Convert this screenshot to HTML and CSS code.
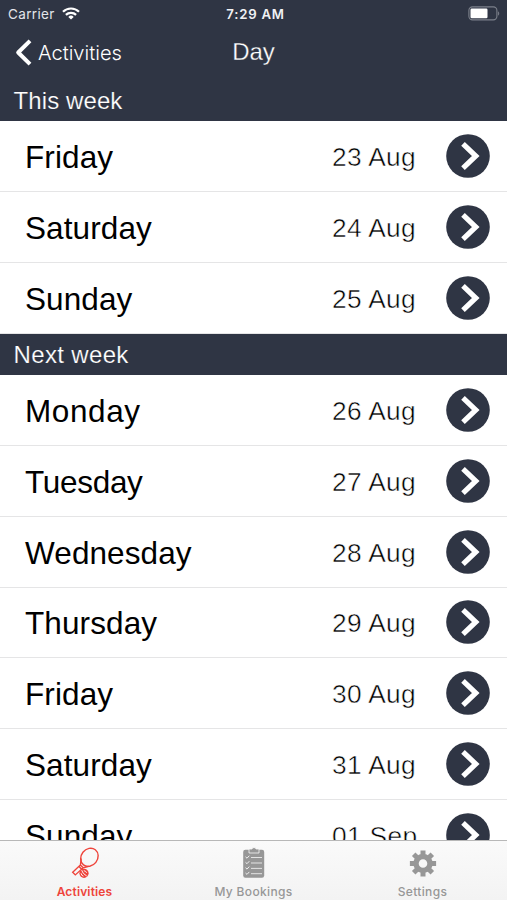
FILE: index.html
```
<!DOCTYPE html>
<html lang="en">
<head>
<meta charset="utf-8">
<title>Day</title>
<link rel="stylesheet" href="styles.css">
</head>
<body>
<svg width="0" height="0" class="defs" aria-hidden="true">
  <symbol id="go" viewBox="0 0 44 44">
    <circle cx="22" cy="22" r="21.8" fill="#2f3544"/>
    <path d="M17 9.8 29.8 22 17 34.2" fill="none" stroke="#fff" stroke-width="5.2"/>
  </symbol>
</svg>
<div class="app">
  <header class="top">
    <div class="status">
      <div class="carrier"><span>Carrier</span>
        <svg width="18" height="13" viewBox="0 0 18 13" fill="none" stroke="#fff" stroke-width="2.2"><path d="M1 4.8a11.3 11.3 0 0 1 16 0M3.9 7.9a7.2 7.2 0 0 1 10.2 0"/><path d="M9 12.6 6.3 9.9a3.8 3.8 0 0 1 5.4 0z" fill="#fff" stroke="none"/></svg>
      </div>
      <div class="clock">7:29 AM</div>
      <svg class="battery" width="33" height="15" viewBox="0 0 33 15"><rect x=".9" y=".9" width="28" height="13" rx="3.6" fill="none" stroke="#7c808b" stroke-width="1.1"/><rect x="2.5" y="2.5" width="17" height="9.8" rx="1.2" fill="#fff"/><path d="M30.2 5.2q2 2.2 0 4.6z" fill="#858993"/></svg>
    </div>
    <nav class="nav">
      <div class="back"><svg width="17" height="27" viewBox="0 0 17 27" fill="none" stroke="#fff" stroke-width="4" stroke-linejoin="round"><path d="M15 1.8 3.2 13.5 15 25.2"/></svg><span>Activities</span></div>
      <h1>Day</h1>
    </nav>
  </header>
  <main class="list">
    <h2 class="first">This week</h2>
    <ul>
      <li><b>Friday</b><time>23 Aug</time><svg><use href="#go"/></svg></li>
      <li><b>Saturday</b><time>24 Aug</time><svg><use href="#go"/></svg></li>
      <li><b>Sunday</b><time>25 Aug</time><svg><use href="#go"/></svg></li>
    </ul>
    <h2 class="next">Next week</h2>
    <ul>
      <li><b class="wide">Monday</b><time>26 Aug</time><svg><use href="#go"/></svg></li>
      <li><b class="tight">Tuesday</b><time>27 Aug</time><svg><use href="#go"/></svg></li>
      <li><b>Wednesday</b><time>28 Aug</time><svg><use href="#go"/></svg></li>
      <li><b>Thursday</b><time>29 Aug</time><svg><use href="#go"/></svg></li>
      <li><b>Friday</b><time>30 Aug</time><svg><use href="#go"/></svg></li>
      <li><b>Saturday</b><time>31 Aug</time><svg><use href="#go"/></svg></li>
      <li><b>Sunday</b><time>01 Sep</time><svg><use href="#go"/></svg></li>
    </ul>
  </main>
  <footer class="tabs">
    <div class="tab active">
      <svg width="30" height="34" viewBox="0 0 30 34" fill="none" stroke="currentColor" stroke-width="1.4"><ellipse cx="19.4" cy="11.3" rx="8.2" ry="9.6" transform="rotate(38 19.4 11.3)"/><path d="M11.2 12.5 10.4 19 2.7 26.2 5.3 28.9 13.2 21.8 18.8 20.3M10.4 19l2.8 2.8M9 20.5l2.7 2.7"/><circle cx="14" cy="27.3" r="4.6" fill="currentColor" stroke="none"/><path d="M11.7 24.2q.6 3.3 5 5.8M13.8 24.7q2.1.2 2.8 2.1M11 27.3q.4 2.4 2.4 2.9" stroke="#fbf5f5" stroke-width="1"/></svg>
      <span>Activities</span>
    </div>
    <div class="tab">
      <svg width="30" height="34" viewBox="0 0 30 34"><rect x="4.2" y="3.7" width="21" height="28" rx="2.2" fill="#979797"/><path d="M10 3h3l.7-1.3h2.6L17 3h3v4H10z" fill="#979797" stroke="#f8f8f8" stroke-width=".8"/><path d="M12 11.5h11M12 17h11M12 22.4h11M12 27.7h11" stroke="#e4e4e4" stroke-width="1"/><path d="M6.5 10.8l1.5 1.4 2.3-2.5M6.5 16.3 8 17.7l2.3-2.5M6.5 21.7 8 23.1l2.3-2.5M6.5 27 8 28.4l2.3-2.5" fill="none" stroke="#f0f0f0" stroke-width="1"/></svg>
      <span>My Bookings</span>
    </div>
    <div class="tab">
      <svg width="30" height="34" viewBox="-15 -17.5 30 34" fill="none" stroke="#979797"><circle r="7" stroke-width="5.4"/><path d="M0-8.5v-4.6M0 8.5v4.6M-8.5 0h-4.6M8.5 0h4.6M-6-6l-3.3-3.3M6-6l3.3-3.3M-6 6l-3.3 3.3M6 6l3.3 3.3" stroke-width="5"/></svg>
      <span>Settings</span>
    </div>
  </footer>
</div>
</body>
</html>
```
FILE: styles.css
```
* { box-sizing: border-box; }
body { margin: 0; background: #fff; font-family: "Liberation Sans", Arial, sans-serif; }
.defs { display: block; height: 0; }
.app { height: 900px; display: flex; flex-direction: column; overflow: hidden; }
.top { background: #2f3544; color: #fff; flex: 0 0 80px; }
.status { display: grid; grid-template-columns: 1fr auto 1fr; height: 27px; align-items: center; padding: 0 6px 0 8px; font-family: Inter, sans-serif; }
.carrier { display: flex; align-items: center; gap: 7px; font-size: 13.5px; letter-spacing: .35px; color: #e3e5ea; }
.clock { font-size: 13.2px; font-weight: 600; letter-spacing: .75px; padding-left: 2px; color: #f0f1f4; }
.battery { justify-self: end; }
.nav { display: grid; grid-template-columns: 1fr auto 1fr; height: 51px; align-items: center; }
.back { display: flex; align-items: center; gap: 6px; padding-left: 15px; font: 300 20.1px Inter, sans-serif; }
h1 { margin: 0; font-size: 24px; font-weight: 400; line-height: 30px; padding-bottom: 1px; -webkit-text-stroke: .3px #2f3544; }
.list { flex: 1 1 0; min-height: 0; overflow: hidden; }
h2 { margin: 0; height: 41.5px; padding-left: 13.5px; font-size: 24px; font-weight: 400; line-height: 42px; color: #fff; background: #2f3544; -webkit-text-stroke: .2px #2f3544; }
h2.first { height: 41px; line-height: 41px; letter-spacing: .1px; }
h2.next { letter-spacing: .35px; }
ul { margin: 0; padding: 0; list-style: none; }
li { display: flex; align-items: center; height: 70.85px; padding: 0 17px 0 25px; border-bottom: 1px solid #e5e5e6; }
b { flex: 1; font-size: 31.5px; font-weight: 400; line-height: 36px; letter-spacing: .1px; color: #000; padding-top: 2px; }
b.wide { letter-spacing: .6px; }
b.tight { letter-spacing: -.3px; }
time { width: 114px; font-size: 26.3px; line-height: 32px; letter-spacing: .35px; color: #000; padding-top: 2px; -webkit-text-stroke: .5px #fff; }
li svg { width: 44px; height: 44px; flex: none; }
.tabs { flex: 0 0 60px; display: grid; grid-template-columns: repeat(3, 1fr); border-top: 1px solid #b8b8b8; background: linear-gradient(#fafafa, #f3f3f3); }
.tab { display: flex; flex-direction: column; align-items: center; gap: 3px; padding-top: 5px; color: #979797; font: 500 12px/17px Inter, sans-serif; letter-spacing: .35px; }
.tab svg { display: block; }
.active { color: #ee443b; font-weight: 600; letter-spacing: .15px; }
```
